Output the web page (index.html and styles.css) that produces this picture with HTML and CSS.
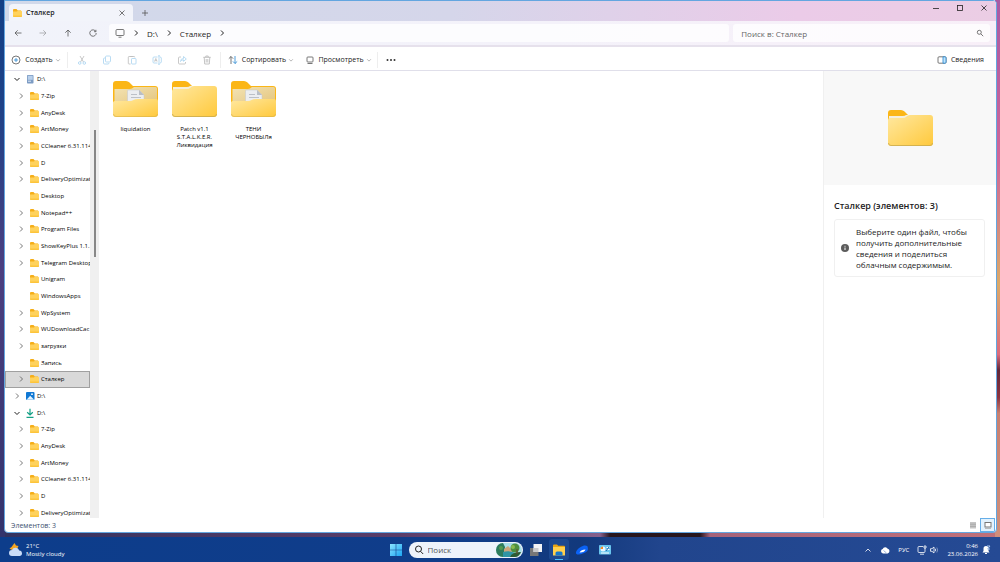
FILE: index.html
```html
<!DOCTYPE html>
<html lang="ru">
<head>
<meta charset="utf-8">
<meta name="viewport" content="width=device-width, initial-scale=1">
<title>Сталкер</title>
<link rel="stylesheet" href="styles.css">
</head>
<body>
<svg class="defs" aria-hidden="true">
  <defs>
    <linearGradient id="gold" x1="0" y1="0" x2="1" y2="1"><stop offset="0" stop-color="#ffe8a0"/><stop offset="1" stop-color="#ffc93c"/></linearGradient>
    <linearGradient id="goldBack" x1="0" y1="0" x2="1" y2="1"><stop offset="0" stop-color="#f3e3b4"/><stop offset="1" stop-color="#e3c47c"/></linearGradient>
    <linearGradient id="win" x1="0" y1="0" x2="1" y2="1"><stop offset="0" stop-color="#8be4ff"/><stop offset="1" stop-color="#1ba5f2"/></linearGradient>
    <symbol id="folder" viewBox="0 0 45 36">
      <path d="M0 3a3 3 0 0 1 3-3h10q2 0 3.500 1.500L20 5v8H0z" fill="#fbb616"/>
      <path d="M1 6h14q2 0 3-1h25v5H1z" fill="#f5efdc"/>
      <path d="M0 10q0-2 2-2h13q2 0 3.500-1.500T22 5h20q3 0 3 3v25q0 3-3 3H3q-3 0-3-3z" fill="url(#gold)"/>
      <path d="M.5 33q0 2.500 2.500 2.500h39q2.500 0 2.500-2.500" fill="none" stroke="#c9a94e" stroke-width=".8"/>
    </symbol>
    <symbol id="folder-full" viewBox="0 0 45 36">
      <path d="M0 3a3 3 0 0 1 3-3h10q2 0 3.500 1.500L20 5h22q3 0 3 3v20H0z" fill="#fbb616"/>
      <path d="M1.500 8H17q2 0 4-2h21.500q1.500 0 1.500 1.500V24H1.500z" fill="url(#goldBack)"/>
      <path d="M14.500 10q0-1 1-1H26l5 5v13H14.500z" fill="#eceef1" stroke="#c3c6cc" stroke-width=".5"/><path d="M26 9v5h5z" fill="#b9bec6"/>
      <path d="M18 13.500h6M18 16.500h10" stroke="#bcc0c7" stroke-width="1"/>
      <path d="M0 21.500Q0 20 2 20h15q2 0 3.500-1T25 18h18q2 0 2 2v13q0 3-3 3H3q-3 0-3-3z" fill="url(#gold)"/>
      <path d="M.5 33q0 2.500 2.500 2.500h39q2.500 0 2.500-2.500" fill="none" stroke="#d9b24a" stroke-width=".6"/>
    </symbol>
    <symbol id="folder-s" viewBox="0 0 9 8">
      <path d="M0 1q0-1 1-1h2.500l1.300 1.500H8v2H0z" fill="#f5ae18"/>
      <path d="M0 2.500h4l.8-.7H8q1 0 1 1V7q0 1-1 1H1Q0 8 0 7z" fill="#ffd25c"/>
      <path d="M0 6.500h9V7q0 1-1 1H1Q0 8 0 7z" fill="#fdc43a"/>
    </symbol>
    <symbol id="right" viewBox="0 0 8 8"><path d="M3 1.500 5.500 4 3 6.500"/></symbol>
    <symbol id="down" viewBox="0 0 8 8"><path d="M1.500 3 4 5.500 6.500 3"/></symbol>
    <symbol id="up" viewBox="0 0 8 8"><path d="M1.500 5.500 4 3l2.500 2.500"/></symbol>
    <symbol id="monitor" viewBox="0 0 10 10"><rect x="1" y="1.500" width="8" height="6" rx="1"/><path d="M3.500 9.200h3"/></symbol>
    <symbol id="close" viewBox="0 0 8 8"><path d="m1.500 1.500 5 5m0-5-5 5"/></symbol>
  </defs>
</svg>

<main class="desktop">
  <section class="window">
    <header class="titlebar">
      <div class="tab">
        <svg class="ic-folder"><use href="#folder-s"/></svg>
        <span class="tab-name">Сталкер</span>
        <button class="plain" aria-label="Закрыть вкладку"><svg class="line i8"><use href="#close"/></svg></button>
      </div>
      <button class="plain new-tab" aria-label="Новая вкладка"><svg class="line i8" viewBox="0 0 8 8"><path d="M4 1v6M1 4h6"/></svg></button>
      <div class="win-controls">
        <button class="plain" aria-label="Свернуть"><svg class="line i8" viewBox="0 0 8 8"><path d="M1 4.500h6"/></svg></button>
        <button class="plain" aria-label="Развернуть"><svg class="line i8" viewBox="0 0 8 8"><rect x="1.500" y="1.500" width="5" height="5"/></svg></button>
        <button class="plain" aria-label="Закрыть"><svg class="line i8"><use href="#close"/></svg></button>
      </div>
    </header>

    <nav class="navbar">
      <div class="nav-buttons">
        <button class="plain" aria-label="Назад"><svg class="line i8" viewBox="0 0 8 8"><path d="M7.500 4H1m2.700-2.700L1 4l2.700 2.700"/></svg></button>
        <button class="plain dim" aria-label="Вперёд"><svg class="line i8" viewBox="0 0 8 8"><path d="M.5 4H7M4.300 1.300 7 4 4.300 6.700"/></svg></button>
        <button class="plain" aria-label="Вверх"><svg class="line i8" viewBox="0 0 8 8"><path d="M4 7.500V1M1.300 3.700 4 1l2.700 2.700"/></svg></button>
        <button class="plain" aria-label="Обновить"><svg class="line i8" viewBox="0 0 8 8"><path d="M6.800 2.500A3.200 3.200 0 1 0 7.200 4M6.900.8v1.900H5"/></svg></button>
      </div>
      <div class="address">
        <svg class="line i10"><use href="#monitor"/></svg>
        <svg class="line i8 bold"><use href="#right"/></svg>
        <a href="#d">D:\</a>
        <svg class="line i8 bold"><use href="#right"/></svg>
        <a href="#stalker">Сталкер</a>
        <svg class="line i8 bold"><use href="#right"/></svg>
      </div>
      <div class="search">
        <input type="search" placeholder="Поиск в: Сталкер" aria-label="Поиск в: Сталкер">
        <svg class="line i8" viewBox="0 0 8 8"><circle cx="3.300" cy="3.300" r="2"/><path d="m4.900 4.900 2.300 2.300"/></svg>
      </div>
    </nav>

    <div class="commands">
      <button class="cmd create"><svg class="line i10" viewBox="0 0 10 10"><circle cx="5" cy="5" r="4"/><path d="M5 3v4M3 5h4" stroke="#2586d0"/></svg><span>Создать</span><svg class="line i6 faint"><use href="#down"/></svg></button>
      <div class="cmd-icons">
        <button class="plain" aria-label="Вырезать" disabled><svg class="line i10" viewBox="0 0 10 10"><path d="M3 1l3.500 6M7 1 3.500 7" stroke="#bbb"/><circle cx="2.700" cy="8" r="1.300"/><circle cx="7.300" cy="8" r="1.300"/></svg></button>
        <button class="plain" aria-label="Копировать" disabled><svg class="line i10" viewBox="0 0 10 10"><rect x="3.500" y="1" width="5" height="6" rx="1"/><path d="M3 3H2.500q-1 0-1 1v4q0 1 1 1H6q1 0 1-1"/></svg></button>
        <button class="plain" aria-label="Вставить" disabled><svg class="line i10" viewBox="0 0 10 10"><path d="M3.500 9H2q-.7 0-.7-.7v-6q0-.8.700-.8h5q.8 0 .8.800M3.300 1.500h2.500" stroke="#bbb"/><rect x="4.500" y="3.500" width="4.500" height="5.500" rx=".7"/></svg></button>
        <button class="plain" aria-label="Переименовать" disabled><svg class="line i10" viewBox="0 0 10 10"><path d="M5.500 2H2q-1 0-1 1v4q0 1 1 1h3.500M8 2q1.300 0 1.300 1v4q0 1-1.300 1M7 .8v8.400M6 .8h2M6 9.200h2"/><path d="m2.500 6.500 1.300-3 1.300 3M3 5.700h1.600" stroke="#bbb"/></svg></button>
        <button class="plain" aria-label="Поделиться" disabled><svg class="line i10" viewBox="0 0 10 10"><path d="M4 2H2.500q-1 0-1 1v5q0 1 1 1h5q1 0 1-1V7" stroke="#bbb"/><path d="M3.500 6.500q0-3 3-3V1.500L9.300 4 6.500 6.300V4.800q-2 0-3 1.700"/></svg></button>
        <button class="plain" aria-label="Удалить" disabled><svg class="line i10" viewBox="0 0 10 10"><path d="M1.300 2.300h7.400M3.800 2.300V1h2.400v1.300M2.200 2.300l.5 6.700h4.600l.5-6.700M4.200 4v3.500M5.800 4v3.500" stroke="#b5b5b5"/></svg></button>
      </div>
      <button class="cmd sort"><svg class="line i10" viewBox="0 0 10 10"><path d="M3 9V1.500M.8 3.700 3 1.500l2.200 2.200"/><path d="M7 1v7.500M4.900 6.400 7 8.500l2.200-2.100" stroke="#2586d0"/></svg><span>Сортировать</span><svg class="line i6 faint"><use href="#down"/></svg></button>
      <button class="cmd view"><svg class="line i8" viewBox="0 0 8 8"><rect x="1" y="1" width="6" height="5" rx=".8"/><path d="M1.500 7.500h5"/></svg><span>Просмотреть</span><svg class="line i6 faint"><use href="#down"/></svg></button>
      <button class="plain more" aria-label="Подробнее"><svg class="i10" viewBox="0 0 10 10" fill="#333"><circle cx="1.500" cy="5" r="1"/><circle cx="5" cy="5" r="1"/><circle cx="8.500" cy="5" r="1"/></svg></button>
      <button class="cmd details-toggle"><svg class="line i10" viewBox="0 0 10 10"><rect x="1" y="1.800" width="8" height="6.400" rx="1"/><path d="M6 1.800h2q1 0 1 1v4.400q0 1-1 1H6z" fill="#bfe3fa" stroke="#2586d0"/></svg><span>Сведения</span></button>
    </div>

    <div class="body">
      <nav class="tree-pane" aria-label="Папки">
        <ul class="tree">
          <li class="root"><svg class="line i8 bold"><use href="#down"/></svg><svg class="i10" viewBox="0 0 10 10"><rect x="2" y="1" width="6.500" height="8.500" rx=".7" fill="#7d9cc4"/><rect x="2.800" y="1.800" width="4.900" height="4" fill="#b8d0ec"/><path d="M3 7.200h3" stroke="#dce8f6"/></svg><a href="#d">D:\</a></li>
          <li><svg class="line i8"><use href="#right"/></svg><svg class="ic-folder"><use href="#folder-s"/></svg><a href="#f">7-Zip</a></li>
          <li><svg class="line i8"><use href="#right"/></svg><svg class="ic-folder"><use href="#folder-s"/></svg><a href="#f">AnyDesk</a></li>
          <li><svg class="line i8"><use href="#right"/></svg><svg class="ic-folder"><use href="#folder-s"/></svg><a href="#f">ArtMoney</a></li>
          <li><svg class="line i8"><use href="#right"/></svg><svg class="ic-folder"><use href="#folder-s"/></svg><a href="#f">CCleaner 6.31.114</a></li>
          <li><svg class="line i8"><use href="#right"/></svg><svg class="ic-folder"><use href="#folder-s"/></svg><a href="#f">D</a></li>
          <li><svg class="line i8"><use href="#right"/></svg><svg class="ic-folder"><use href="#folder-s"/></svg><a href="#f">DeliveryOptimizat</a></li>
          <li><svg class="i8"></svg><svg class="ic-folder"><use href="#folder-s"/></svg><a href="#f">Desktop</a></li>
          <li><svg class="line i8"><use href="#right"/></svg><svg class="ic-folder"><use href="#folder-s"/></svg><a href="#f">Notepad++</a></li>
          <li><svg class="line i8"><use href="#right"/></svg><svg class="ic-folder"><use href="#folder-s"/></svg><a href="#f">Program Files</a></li>
          <li><svg class="line i8"><use href="#right"/></svg><svg class="ic-folder"><use href="#folder-s"/></svg><a href="#f">ShowKeyPlus 1.1.</a></li>
          <li><svg class="line i8"><use href="#right"/></svg><svg class="ic-folder"><use href="#folder-s"/></svg><a href="#f">Telegram Desktop</a></li>
          <li><svg class="i8"></svg><svg class="ic-folder"><use href="#folder-s"/></svg><a href="#f">Unigram</a></li>
          <li><svg class="i8"></svg><svg class="ic-folder"><use href="#folder-s"/></svg><a href="#f">WindowsApps</a></li>
          <li><svg class="line i8"><use href="#right"/></svg><svg class="ic-folder"><use href="#folder-s"/></svg><a href="#f">WpSystem</a></li>
          <li><svg class="line i8"><use href="#right"/></svg><svg class="ic-folder"><use href="#folder-s"/></svg><a href="#f">WUDownloadCac</a></li>
          <li><svg class="line i8"><use href="#right"/></svg><svg class="ic-folder"><use href="#folder-s"/></svg><a href="#f">загрузки</a></li>
          <li><svg class="i8"></svg><svg class="ic-folder"><use href="#folder-s"/></svg><a href="#f">Запись</a></li>
          <li class="selected"><svg class="line i8"><use href="#right"/></svg><svg class="ic-folder"><use href="#folder-s"/></svg><a href="#stalker">Сталкер</a></li>
          <li class="root"><svg class="line i8"><use href="#right"/></svg><svg class="i10" viewBox="0 0 10 10"><rect x="1" y="1" width="8.500" height="8" rx="1" fill="#0f78d4"/><path d="m1.500 8.700 3.700-4 4 4z" fill="#e3f3ff"/><circle cx="7" cy="3.200" r=".9" fill="#fff"/></svg><a href="#d">D:\</a></li>
          <li class="root"><svg class="line i8 bold"><use href="#down"/></svg><svg class="i10" viewBox="0 0 10 10" fill="none" stroke="#14a085" stroke-width="1.200"><path d="M5 .8v6M2.200 4.300 5 7l2.800-2.700M1.500 9.300h7"/></svg><a href="#d">D:\</a></li>
          <li><svg class="line i8"><use href="#right"/></svg><svg class="ic-folder"><use href="#folder-s"/></svg><a href="#f">7-Zip</a></li>
          <li><svg class="line i8"><use href="#right"/></svg><svg class="ic-folder"><use href="#folder-s"/></svg><a href="#f">AnyDesk</a></li>
          <li><svg class="line i8"><use href="#right"/></svg><svg class="ic-folder"><use href="#folder-s"/></svg><a href="#f">ArtMoney</a></li>
          <li><svg class="line i8"><use href="#right"/></svg><svg class="ic-folder"><use href="#folder-s"/></svg><a href="#f">CCleaner 6.31.114</a></li>
          <li><svg class="line i8"><use href="#right"/></svg><svg class="ic-folder"><use href="#folder-s"/></svg><a href="#f">D</a></li>
          <li><svg class="line i8"><use href="#right"/></svg><svg class="ic-folder"><use href="#folder-s"/></svg><a href="#f">DeliveryOptimizat</a></li>
        </ul>
      </nav>
      <div class="scrollbar"><div class="thumb"></div></div>

      <div class="files">
        <a class="file" href="#f"><svg class="big"><use href="#folder-full"/></svg><span>liquidation</span></a>
        <a class="file" href="#f"><svg class="big"><use href="#folder"/></svg><span>Patch v1.1<br>S.T.A.L.K.E.R.<br>Ликвидация</span></a>
        <a class="file" href="#f"><svg class="big"><use href="#folder-full"/></svg><span>ТЕНИ<br>ЧЕРНОБЫЛя</span></a>
      </div>

      <aside class="details">
        <div class="preview"><svg class="big"><use href="#folder"/></svg></div>
        <h2>Сталкер (элементов: 3)</h2>
        <div class="hint">
          <svg class="i8" viewBox="0 0 8 8"><circle cx="4" cy="4" r="4" fill="#5c5c5c"/><path d="M4 3.500V6M4 1.800v.9" stroke="#fff"/></svg>
          <p>Выберите один файл, чтобы получить дополнительные сведения и поделиться облачным содержимым.</p>
        </div>
      </aside>
    </div>

    <footer class="status">
      <span class="count">Элементов: 3</span>
      <button class="plain mode" aria-label="Таблица"><svg class="i8" viewBox="0 0 8 8"><path d="M1 1h6v6.500H1z" fill="#c4c4c4"/><path d="M1 3.200h6M1 5.400h6" stroke="#999" stroke-width=".6"/></svg></button>
      <button class="plain mode active" aria-label="Крупные значки"><svg class="i8" viewBox="0 0 8 8"><rect x="1" y="1.500" width="6" height="4.500" fill="#fff" stroke="#777"/><path d="M1 7.500h6" stroke="#bbb"/></svg></button>
    </footer>
  </section>
</main>

<footer class="taskbar">
  <button class="plain weather">
    <svg class="i14" viewBox="0 0 14 14"><path d="M5.500 0 7 2.500 9.500 3 8 6l-5 1-2.500-1.500 2-1.500z" fill="#f5a623"/><path d="M3 13a3 3 0 0 1 0-6 3.800 3.800 0 0 1 7.200.5A2.800 2.800 0 0 1 11 13z" fill="#c9dcf8"/></svg>
    <span>21°C<br>Mostly cloudy</span>
  </button>
  <div class="apps">
    <button class="app" aria-label="Пуск"><svg class="i12" viewBox="0 0 12 12" fill="url(#win)"><path d="M0 0h5.700v5.700H0zM6.300 0H12v5.700H6.300zM0 6.300h5.700V12H0zM6.300 6.300H12V12H6.300z"/></svg></button>
    <label class="find">
      <svg class="line i10" viewBox="0 0 10 10"><circle cx="4.500" cy="4" r="3"/><path d="m6.600 6.400 2.600 2.600"/></svg>
      <input type="text" placeholder="Поиск" aria-label="Поиск">
      <svg class="scene" viewBox="0 0 26 14"><rect width="26" height="14" rx="7" fill="#a9dfe8"/><path d="M0 7a7 7 0 0 1 7-7l2 4-1 10H7a7 7 0 0 1-7-7z" fill="#2d7b5c"/><path d="M8 6l4-3 4 4v3H8z" fill="#cda67a"/><path d="M7 9q6-2 12 1l-2 4H7z" fill="#2f95a5"/><circle cx="19" cy="5" r="4.500" fill="#4d8f3f"/><circle cx="17" cy="4" r="2" fill="#89b94f"/><path d="M14 14q2-5 11-5-2 5-6 5z" fill="#2d5c34"/><path d="M21 6v5" stroke="#68442c"/><circle cx="5" cy="5" r="2" fill="#539a50"/></svg>
    </label>
    <button class="app" aria-label="Представление задач"><svg class="i12" viewBox="0 0 12 12"><rect y="4" width="8.500" height="8" fill="#777"/><rect x="3.500" y="0" width="8.500" height="8" fill="#f2f3f5"/><path d="M3.500 4h5v4h-5z" fill="#c8c9cc"/></svg></button>
    <button class="app running" aria-label="Проводник"><svg class="i12" viewBox="0 0 12 12"><path d="M0 1.500q0-1 1-1h3l1.200 1.300H11q1 0 1 1V11H0z" fill="#e8a412"/><path d="M0 3h12v8.500H0z" fill="#ffd04c"/><path d="M2.500 11.500V9q0-1.500 1.500-1.500h4q1.500 0 1.500 1.500v2.500z" fill="#1478cf"/></svg></button>
    <button class="app" aria-label="Браузер"><svg class="i12" viewBox="0 0 12 12"><path d="M0 8q1.500-4.500 8-6.500Q12 1 11.800 4q1 3-3.800 5Q2 11.500.5 10T0 8z" fill="#0a62f5"/><path d="M3.500 8.500q1.500-3 6-3-1 3.200-6 3z" fill="#fff"/></svg></button>
    <button class="app" aria-label="Панель управления"><svg class="i12" viewBox="0 0 12 12"><rect y="1" width="12" height="9.500" rx=".8" fill="#69c5ee"/><circle cx="4" cy="5" r="2.500" fill="#e9f7ff"/><path d="M4 5V2.500A2.500 2.500 0 0 0 1.500 5z" fill="#f28b25"/><path d="M7.500 3.500h3M7.500 5.500h3M2 9h8" stroke="#fff"/><path d="M7 7l3-4" stroke="#2465a8"/></svg></button>
  </div>
  <div class="tray">
    <button class="plain" aria-label="Скрытые значки"><svg class="line i8"><use href="#up"/></svg></button>
    <svg class="i10" viewBox="0 0 10 10"><path d="M3 8.500a2.300 2.300 0 0 1-.3-4.500 2.700 2.700 0 0 1 5-.3A2.500 2.500 0 0 1 7.700 8.500z" fill="#fff"/><path d="m3.500 5.500 3 2.500" stroke="#9db6dd"/></svg>
    <span class="lang">РУС</span>
    <button class="plain net" aria-label="Сеть и звук">
      <svg class="line i10" viewBox="0 0 10 10"><path d="M6 1.500H2q-1 0-1 1v4q0 1 1 1h5q1 0 1-1V5M3 9.200h4M7 1h2v2H7zM8 3v2"/></svg>
      <svg class="line i10" viewBox="0 0 10 10"><path d="M1.500 3.700H3L5 2v6L3 6.300H1.500zM6.300 3.700q.8 1.300 0 2.600"/><path d="M7.800 2.500q1.600 2.500 0 5" opacity=".5"/></svg>
    </button>
    <button class="plain clock">
      <time>0:46<br>23.06.2026</time>
      <svg class="i10" viewBox="0 0 10 10"><path d="M1.500 7.500 2.500 6V3.500a2.500 2.500 0 0 1 5 0V6l1 1.500zM4 8h2v1H4z" fill="#fff"/><path d="M6 1h3L6.500 4H9" fill="none" stroke="#a9c4ee"/></svg>
    </button>
  </div>
</footer>
</body>
</html>
```
FILE: styles.css
```css
* { box-sizing: border-box; }
html, body { height: 100%; }
body {
  margin: 0;
  display: flex;
  flex-direction: column;
  overflow: hidden;
  font-family: "Open Sans", "Noto Sans", sans-serif;
  font-size: 7px;
  color: #1c1c1c;
}
.defs { position: absolute; width: 0; height: 0; }
ul, p, h2 { margin: 0; padding: 0; }
a { color: inherit; text-decoration: none; }
button, input { font: inherit; color: inherit; }
.plain, .cmd, .app {
  display: flex;
  align-items: center;
  justify-content: center;
  padding: 0;
  border: 0;
  background: none;
}
svg { flex: none; display: block; }
.i6 { width: 6px; height: 6px; }
.i8 { width: 8px; height: 8px; }
.i10 { width: 10px; height: 10px; }
.i12 { width: 12px; height: 12px; }
.i14 { width: 14px; height: 14px; }
.line { fill: none; stroke: #555; stroke-width: 0.8; }
.bold { stroke: #222; stroke-width: 1; }
.faint { stroke: #888; }
.ic-folder { width: 9px; height: 8px; }
.big { width: 45px; height: 36px; }

.desktop {
  flex: 1;
  min-height: 0;
  padding: 0 3px 4px 4px;
  background:
    linear-gradient(#a85aa4, #cf6798 30%, #dba968 53%, #dd6b7c 66%, #612638 69%, #8c3440 74%, #c98070 77%, #cf8f7b) right / 5px 100% no-repeat,
    linear-gradient(#123f85, #1e4288 20%, #4b3f80 50%, #33336c) left / 5px 100% no-repeat,
    linear-gradient(90deg, #33325f, #5a3d69 40%, #85608c 60%, #27161e 61%, #27161e 70%, #a4627a 71%, #c0707a) bottom / 100% 6px no-repeat;
}
.window {
  display: flex;
  flex-direction: column;
  height: 100%;
  border: 1px solid #63a6e0;
  border-radius: 0 4px 4px 4px;
  background: #fff;
  overflow: hidden;
}

.titlebar {
  display: flex;
  align-items: flex-end;
  height: 20px;
  padding-left: 4px;
  background: linear-gradient(90deg, #d1d9ea, #d5d6ea 45%, #ebcbe8 80%, #ebcde4);
}
.tab {
  display: flex;
  align-items: center;
  gap: 4px;
  width: 124px;
  height: 17px;
  padding: 0 7px 0 4px;
  border-radius: 4px 4px 0 0;
  background: #f2f4fa;
  font-weight: 600;
}
.tab-name { flex: 1; }
.new-tab { width: 24px; height: 17px; }
.win-controls { display: flex; align-self: flex-start; margin-left: auto; }
.win-controls button { width: 24px; height: 14px; }
.win-controls .line { stroke: #222; }

.navbar {
  display: flex;
  align-items: center;
  height: 26px;
  padding-right: 6px;
  gap: 4px;
  border-bottom: 2px solid #e6e1ec;
  background: linear-gradient(90deg, #f1f3fa, #f4f2fa 55%, #f8eff8);
}
.nav-buttons { display: flex; }
.nav-buttons button { width: 25px; height: 18px; }
.nav-buttons .dim { opacity: 0.5; }
.address, .search {
  display: flex;
  align-items: center;
  height: 18px;
  border-radius: 3px;
  background: rgba(255, 255, 255, 0.75);
}
.address { flex: 615; gap: 7px; padding-left: 6px; font-size: 8px; }
.search { flex: 243; padding: 0 6px 0 8px; }
.search input {
  flex: 1;
  min-width: 0;
  padding: 0;
  border: 0;
  outline: 0;
  background: none;
  font-size: 8px;
}
.search input::placeholder { color: #666; opacity: 1; }

.commands {
  display: flex;
  align-items: center;
  height: 24px;
  padding: 2px 12px 0 0;
  border-bottom: 1px solid #e0dfea;
}
.cmd { gap: 2px; height: 16px; white-space: nowrap; }
.cmd span { margin-left: 2px; }
.create { width: 62px; }
.cmd-icons {
  display: flex;
  border: solid #eee;
  border-width: 0 1px;
  padding: 0 1px;
}
.cmd-icons button { width: 25px; height: 16px; }
.cmd-icons .line { stroke: #a8d3f0; }
.sort { width: 80px; }
.view { width: 77px; border-right: 1px solid #eee; }
.more { width: 26px; height: 16px; }
.details-toggle { margin-left: auto; }

.body { display: flex; flex: 1; min-height: 0; }
.tree-pane { display: flex; width: 85px; overflow: hidden; }
.tree {
  display: flex;
  flex-direction: column;
  width: 100%;
  margin-bottom: -3px;
  list-style: none;
  font-size: 6px;
  color: #000;
}
.tree li {
  display: flex;
  flex: 1;
  align-items: center;
  min-height: 0;
  padding-left: 12px;
  line-height: 10px;
}
.tree .root { padding-left: 8px; }
.tree .root .i10 { margin-left: 4px; }
.tree .ic-folder { margin-left: 5px; }
.tree a { margin-left: 2px; white-space: nowrap; }
.tree .selected {
  outline: 1px solid #a0a0a0;
  outline-offset: -1px;
  background: #d9d9d9;
}
.scrollbar {
  display: flex;
  flex-direction: column;
  align-items: center;
  width: 9px;
  padding-top: 59px;
  background: #f0f0f0;
}
.thumb { width: 2px; height: 127px; background: #888; }

.files {
  display: flex;
  flex: 1;
  align-items: flex-start;
  padding: 10px 0 0 7px;
}
.file {
  display: flex;
  flex-direction: column;
  align-items: center;
  gap: 8px;
  width: 59px;
  font-size: 6px;
  line-height: 8px;
  text-align: center;
  color: #000;
}

.details { width: 173px; border-left: 1px solid #f0f0f0; }
.preview {
  display: grid;
  place-items: center;
  height: 114px;
  background: #f8f8f8;
}
.details h2 {
  margin: 14px 10px 6px;
  font-size: 9px;
  line-height: 14px;
  font-weight: 600;
}
.hint {
  display: flex;
  align-items: center;
  gap: 7px;
  margin: 0 11px 0 10px;
  padding: 6px;
  border: 1px solid #f0f0f0;
  border-radius: 3px;
  font-size: 8px;
  line-height: 11px;
}

.status { display: flex; align-items: center; height: 14px; padding-right: 1px; }
.count { flex: 1; padding-left: 6px; color: #3c5070; }
.mode { width: 15px; height: 14px; }
.mode.active { border: 1px solid #66aee8; background: #e3f2fd; }

.taskbar {
  display: grid;
  grid-template-columns: 1fr auto 1fr;
  align-items: center;
  height: 25px;
  padding: 0 9px;
  color: #fff;
  background: linear-gradient(90deg, #0d3d8b, #103d8a 45%, #12397c 58%, #21458d 66%, #254a94);
}
.weather { justify-self: start; gap: 3px; text-align: left; line-height: 8px; font-size: 6px; }
.apps { display: flex; align-items: center; gap: 3px; }
.app { width: 20px; height: 21px; }
.running {
  border-radius: 3px;
  background: linear-gradient(#4cc2ff, #4cc2ff) bottom / 8px 1px no-repeat #1c4990;
}
.find {
  display: flex;
  align-items: center;
  gap: 4px;
  width: 114px;
  height: 16px;
  padding: 0 1px 0 5px;
  border-radius: 8px;
  background: #eef3fb;
}
.find .line { stroke: #222; stroke-width: 1; }
.find input {
  flex: 1;
  min-width: 0;
  padding: 0;
  border: 0;
  outline: 0;
  background: none;
  font-size: 8px;
}
.find input::placeholder { color: #555; opacity: 1; }
.scene { width: 26px; height: 14px; }
.tray { display: flex; justify-self: end; align-items: center; gap: 8px; font-size: 6px; }
.tray .line { stroke: #fff; }
.net { gap: 2px; }
.clock { gap: 3px; }
.clock time { text-align: right; line-height: 8px; }
```
